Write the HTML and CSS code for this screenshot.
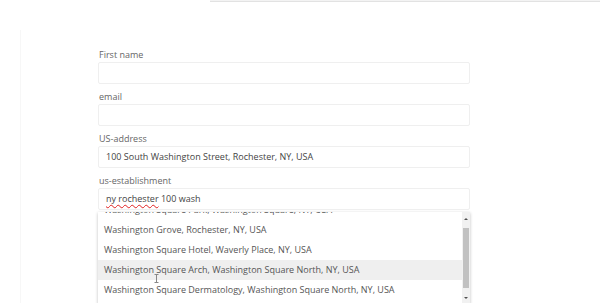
FILE: index.html
```html
<!DOCTYPE html>
<html>
<head>
<meta charset="utf-8">
<link rel="stylesheet" href="styles.css">
</head>
<body>
<div class="topbar"></div>
<div class="main">
  <form class="form">
    <div class="field">
      <label class="label">First name</label>
      <div class="input"></div>
    </div>
    <div class="field">
      <label class="label">email</label>
      <div class="input"></div>
    </div>
    <div class="field">
      <label class="label">US-address</label>
      <div class="input">100 South Washington Street, Rochester, NY, USA</div>
    </div>
    <div class="field field-ac">
      <label class="label">us-establishment</label>
      <div class="input"><span class="typo">ny rochester</span> 100 wash</div>
      <div class="dropdown">
        <ul class="list">
          <li class="item">Washington Square Park, Washington Square, NY, USA</li>
          <li class="item">Washington Grove, Rochester, NY, USA</li>
          <li class="item">Washington Square Hotel, Waverly Place, NY, USA</li>
          <li class="item item-hover">Washington Square Arch, Washington Square North, NY, USA</li>
          <li class="item">Washington Square Dermatology, Washington Square North, NY, USA</li>
        </ul>
        <div class="scrollbar">
          <div class="arrow arrow-up"></div>
          <div class="thumb"></div>
          <div class="arrow arrow-down"></div>
        </div>
        <svg class="cursor" width="5" height="9" viewBox="0 0 5 9"><path d="M0.5 0.5h4M2.5 0.5v8M0.5 8.5h4" stroke="#888" stroke-width="1" fill="none"/></svg>
      </div>
    </div>
  </form>
</div>
</body>
</html>
```

FILE: styles.css
```css
html, body {
  margin: 0;
  padding: 0;
  background: #fff;
}
body {
  width: 600px;
  height: 303px;
  overflow: hidden;
  font-family: "Open Sans", "Liberation Sans", sans-serif;
  font-size: 9px;
  color: #555;
}
.topbar {
  margin-left: 210px;
  height: 1px;
  background: #f3f3f3;
  border-bottom: 1px solid #e2e2e2;
}
.main {
  margin-top: 28px;
  margin-left: 20px;
  height: 261px;
  border-left: 1px solid #f7f7f7;
  padding-left: 77px;
  padding-top: 12px;
}
.form {
  width: 372px;
  margin: 0;
}
.field {
  position: relative;
}
.label {
  display: block;
  margin-top: 6px;
  height: 14px;
  line-height: 14px;
  padding-left: 1px;
  color: #666;
}
.input {
  box-sizing: border-box;
  height: 22px;
  line-height: 20px;
  border: 1px solid #efefef;
  border-radius: 2px;
  padding-left: 7px;
  color: #444;
}
.typo {
  text-decoration: underline wavy #e02020;
  text-decoration-thickness: 1px;
  text-underline-offset: 2px;
}
.dropdown {
  position: absolute;
  left: 0;
  top: 38px;
  width: 372px;
  height: 92px;
  overflow: hidden;
  background: #fff;
  box-shadow: 0 1px 3px rgba(0,0,0,0.25);
}
.list {
  list-style: none;
  margin: -12px 0 0 0;
  padding: 0;
  width: 364px;
}
.item {
  height: 20px;
  line-height: 20px;
  padding-left: 6px;
  color: #555;
  white-space: nowrap;
}
.item-hover {
  background: #efefef;
}
.scrollbar {
  position: absolute;
  right: 0;
  top: 0;
  bottom: 0;
  width: 8px;
  background: #f1f1f1;
  display: flex;
  flex-direction: column;
}
.arrow {
  height: 16px;
  position: relative;
}
.arrow::after {
  content: "";
  position: absolute;
  left: 2px;
  border-left: 2px solid transparent;
  border-right: 2px solid transparent;
}
.arrow-up::after {
  top: 6px;
  border-bottom: 2px solid #505050;
}
.arrow-down::after {
  bottom: 5px;
  border-top: 2px solid #505050;
}
.thumb {
  flex: 1;
  margin: 0 1px;
  background: #c1c1c1;
}
.cursor {
  position: absolute;
  left: 56px;
  top: 62px;
}
```
